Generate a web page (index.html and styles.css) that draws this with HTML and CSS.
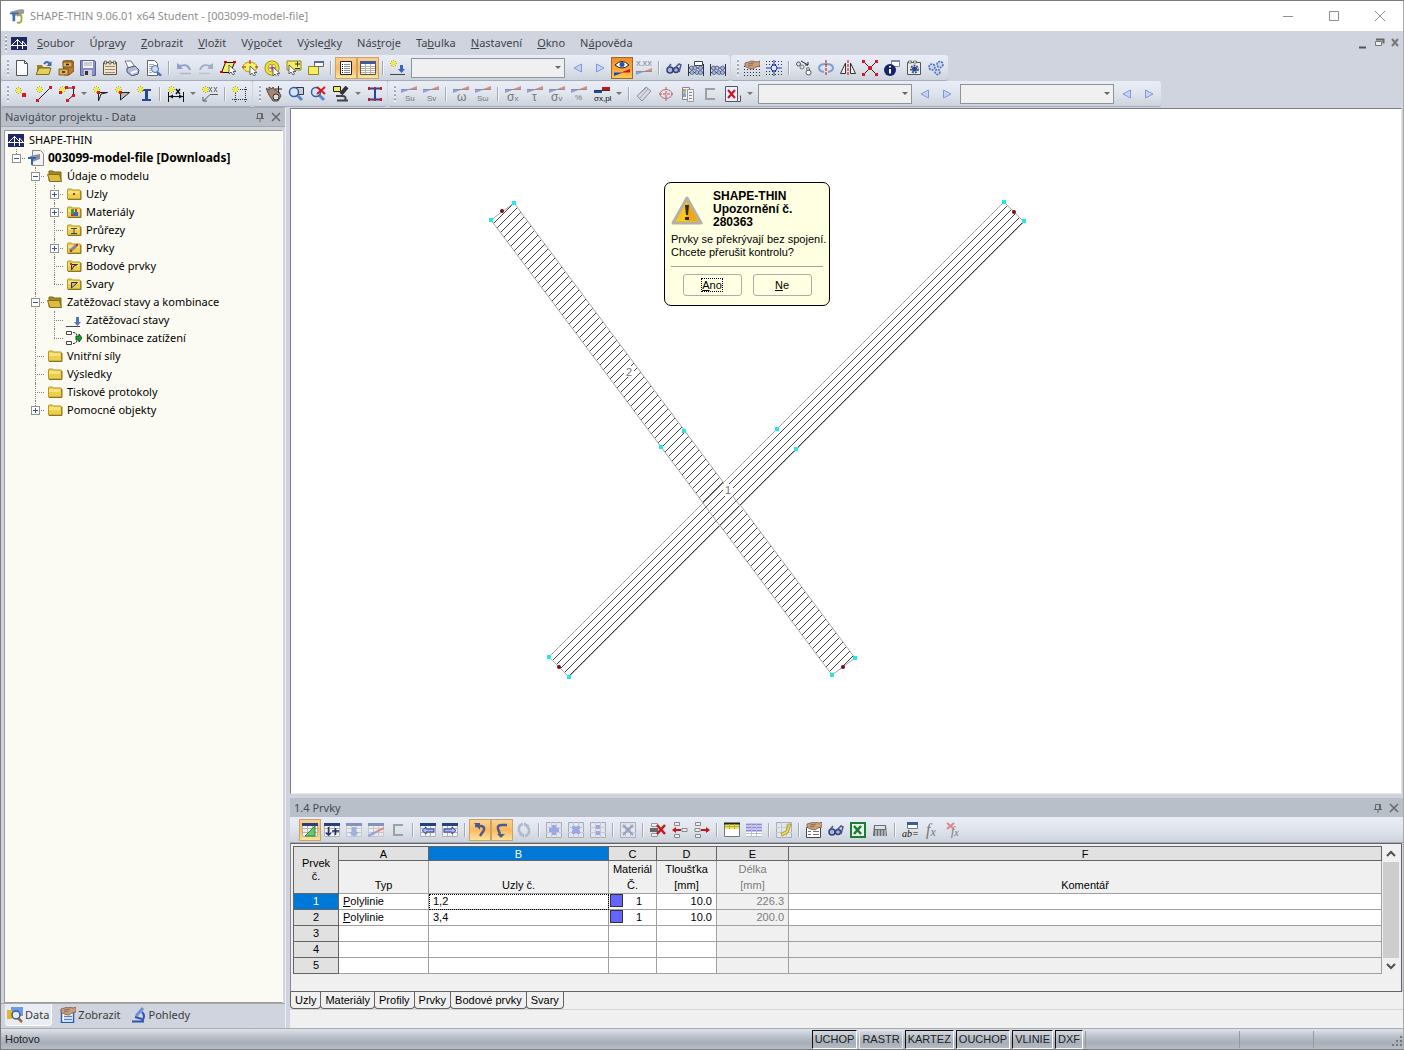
FILE: index.html
```html
<!DOCTYPE html>
<html lang="cs">
<head>
    <meta charset="UTF-8">
    <title>SHAPE-THIN</title>
    <link rel="stylesheet" href="styles.css">
</head>
<body>
<!-- icons -->
<svg class="defs" aria-hidden="true">
    <defs>
        <g id="star"><path d="M3.500 0v7M0 3.500h7M1 1l5 5M6 1L1 6" stroke="#b5ad18"/><path d="M3.500 1v5M1 3.500h5" stroke="#f7f03c" stroke-width="2"/></g>
        <g id="wedge"><path d="M0 3.500h9L0 7z" fill="#8f9fe0"/><path d="M16 3.500H7L16 0z" fill="#e08a80"/><path d="M0 3.500h16" stroke="#8f8f95"/></g>
        <g id="grid"><path d="M0 1h16v14H0z" fill="#f4f4f4"/><path d="M.5 1v13.500h15V1M0 6.500h16M0 10.500h16M5.500 3v12M10.500 3v12" fill="none" stroke="#b2b2b2"/><path d="M0 1h16v3H0z" fill="#27407e"/></g>
        <g id="sheet"><path d="M.5.5h15v15H.5z" fill="#e3e6ef" stroke="#aab"/><path d="M0 5.500h16M0 10.500h16M5.500 0v16M10.500 0v16" stroke="#c6c9d3"/></g>
        <g id="fold"><path d="M1.500 4q0-1 1-1h3l1 1h7q1 0 1 1v8h-13z" fill="#ecd04a" stroke="#b7971d"/><path d="M2 5h11v3H2z" fill="#f6e282"/><path d="M2 13.500h13V5" fill="none" stroke="#8a742c"/></g>
        <g id="arrowcur"><path d="M0 0v9l2-2 2 3 1.500-1L4 6.500h3z" fill="#fff" stroke="#444" stroke-width=".8"/></g>
        <g id="glasses"><circle cx="4" cy="10" r="3" fill="#aeb9da" stroke="#34427a" stroke-width="1.500"/><circle cx="10" cy="10" r="2.500" fill="#aeb9da" stroke="#34427a" stroke-width="1.500"/><path d="M2 8L5 4M9 8l4-4 2 1-2 7" fill="none" stroke="#4a5a90" stroke-width="1.500"/></g>
        <g id="abacus"><path d="M.5 4v12M15.500 4v12M0 8h16M0 12.500h16" stroke="#333"/><g fill="#a8b5dc" stroke="#3c4d80" stroke-width=".7"><circle cx="3.500" cy="8" r="2"/><circle cx="7" cy="8" r="2"/><circle cx="12.500" cy="8" r="2"/><circle cx="4" cy="12.500" r="2"/><circle cx="9" cy="12.500" r="2"/><circle cx="12.500" cy="12.500" r="2"/></g></g>
        <g id="lens"><path d="M9 9l5 5" stroke="#5f86d2" stroke-width="3"/><circle cx="6" cy="6" r="4.500" fill="#d5e5fa" stroke="#3c5a9c" stroke-width="1.500"/></g>
        <g id="hand"><path d="M1 3l7-2 5 1 3-1v5l-4 1-3 2-5-1-3-2z" fill="#c99f7d" stroke="#7b5a44" stroke-width=".8"/><path d="M4 4l6-1M4 6l5-1" stroke="#8f6d55"/></g>
    </defs>
    <symbol id="app" viewBox="0 0 18 18"><path d="M2 4l12-3 3 1v4l-4 2-9 1z" fill="#9a9a9a"/><path d="M1 5h10v2H7v8H4V7H1z" fill="#3f6fb5"/><path d="M9 9q3-2 5 0v6q-2 3-5 1" fill="none" stroke="#b59e3c" stroke-width="2"/></symbol>
    <symbol id="bridge" viewBox="0 0 16 13"><path d="M0 0h16v13H0z" fill="#1f2766"/><path d="M0 8.500h16M6.500 2v10M11.500 4v8M1 8L6.500 2.500 12 8M11.500 4L15 8" stroke="#fff" fill="none"/></symbol>
    <symbol id="new" viewBox="0 0 16 16"><path d="M2.500.5h8l3 3v12h-11z" fill="#fbfbfd" stroke="#555"/><path d="M10.500.5v3h3" fill="none" stroke="#555"/></symbol>
    <symbol id="open" viewBox="0 0 16 16"><path d="M1 14V5h5l1 2h7v7z" fill="#9a8423"/><path d="M0 14.500L3 8h12l-2 6.500z" fill="#e5d05d" stroke="#7f6c1a"/><path d="M8 4q3-4 6 0" fill="none" stroke="#3f6ca8" stroke-width="2"/><path d="M15.500 1v5h-5z" fill="#3f6ca8"/></symbol>
    <symbol id="cabinet" viewBox="0 0 16 16"><path d="M5 1l8-1 3 2v9l-5 4H6z" fill="#b57f30" stroke="#694412" stroke-width=".8"/><path d="M1 9h9v6H1zM5 2h9v5H5z" fill="#dfad58" stroke="#694412" stroke-width=".8"/><path d="M4 12h3M8 4.500h3" stroke="#222" stroke-width="1.500"/></symbol>
    <symbol id="save" viewBox="0 0 16 16"><path d="M.5.5h14l1 1v14H.5z" fill="#8a8fc6" stroke="#5a5f94"/><path d="M3 1h10v7H3z" fill="#f1f1f6"/><path d="M4 3h8M4 5h8" stroke="#aaa"/><path d="M4 10h8v6H4z" fill="#d2d2de"/><path d="M5 11h3v4H5z" fill="#333"/></symbol>
    <symbol id="notes" viewBox="0 0 16 16"><path d="M1.500 2.500h13v12h-13z" fill="#f0e4cf" stroke="#5e5344"/><path d="M2.500 1h2v3h-2zM7 1h2v3H7zM11.500 1h2v3h-2z" fill="#eee" stroke="#5e5344" stroke-width=".8"/><path d="M3 6.500h10M3 9.500h10M3 12.500h10" stroke="#9c8b70"/></symbol>
    <symbol id="print" viewBox="0 0 16 16"><path d="M1 1h6l4 6-6 2z" fill="#fdfdfd" stroke="#777"/><path d="M3 8l8-2 4 4-1 4-6 2-5-4z" fill="#b4bbdc" stroke="#4b5178"/><path d="M7 13l6-2" stroke="#fff" stroke-width="2"/></symbol>
    <symbol id="preview" viewBox="0 0 16 16"><path d="M1.500.5h7l3 3v12h-10z" fill="#fff" stroke="#666"/><path d="M3 4.500h5M3 6.500h3M3 8.500h2M3 10.500h2M3 12.500h3" stroke="#aaa"/><path d="M11 12l4 4" stroke="#4b70bd" stroke-width="2.500"/><circle cx="9" cy="9" r="3.500" fill="#c9dcf5" stroke="#4b6fae"/></symbol>
    <symbol id="undo" viewBox="0 0 16 16"><path d="M1 3v6h6L5 7q5-3 8 3h2Q13 2 4 5z" fill="#8fa2cc"/><path d="M4 13.500h11" stroke="#adb5c9" stroke-width="1.500"/></symbol>
    <symbol id="redo" viewBox="0 0 16 16"><path d="M15 3v6H9l2-2Q6 4 3 10H1Q3 2 12 5z" fill="#a3aec6"/><path d="M1 13.500h11" stroke="#bcc2ce" stroke-width="1.500"/></symbol>
    <symbol id="selquad" viewBox="0 0 16 16"><path d="M5.500 2.500h9l-4 10h-9z" fill="#f4ef5e" stroke="#111"/><path d="M4 2h3M13 2h3M0 12h3M9 12h3" stroke="#d00" stroke-width="2"/><use href="#arrowcur" x="9" y="5"/></symbol>
    <symbol id="sellasso" viewBox="0 0 16 16"><ellipse cx="8" cy="7" rx="7" ry="5" fill="#f6f16a" stroke="#a8981a"/><path d="M0 7h4M8 0v4M13 7h3" stroke="#d00"/><use href="#arrowcur" x="8" y="6"/></symbol>
    <symbol id="selring" viewBox="0 0 16 16"><circle cx="8" cy="8" r="5.500" fill="#fff" stroke="#8a8010" stroke-width="4"/><circle cx="8" cy="8" r="5.500" fill="none" stroke="#f0e62c" stroke-width="2.500"/><path d="M5 8h6M8 5v6" stroke="#d00"/><use href="#arrowcur" x="9" y="7"/></symbol>
    <symbol id="selplus" viewBox="0 0 16 16"><path d="M1 1h14v9H1z" fill="#f1ec62" stroke="#8e8625"/><path d="M9 4h5M11.500 1.500v5M9 8.500h5" stroke="#333"/><use href="#arrowcur" x="3" y="5"/></symbol>
    <symbol id="selwin" viewBox="0 0 16 16"><path d="M.5 6.500h10v8H.5z" fill="#f4ee63" stroke="#8e8625"/><path d="M6.500 1.500h9v5h-9z" fill="#fff" stroke="#667"/><path d="M6 1h10v2H6z" fill="#56699b"/></symbol>
    <symbol id="list" viewBox="0 0 16 16"><path d="M2.500 1.500h11v13h-11z" fill="#fff" stroke="#223"/><path d="M6 4.500h6M6 6.500h6M6 8.500h6M6 10.500h6M6 12.500h6" stroke="#8a8a94"/><path d="M4 4.500h1M4 6.500h1M4 8.500h1M4 10.500h1M4 12.500h1" stroke="#111"/></symbol>
    <symbol id="table" viewBox="0 0 16 16"><path d="M.5 1.500h15v13H.5z" fill="#fff" stroke="#55524c"/><path d="M0 1h16v3H0z" fill="#3e5a9a"/><path d="M1 6.500h14M1 8.500h14M1 10.500h14M1 12.500h14M5.500 4v10M10.500 4v10" stroke="#b8b2a4"/></symbol>
    <symbol id="newload" viewBox="0 0 16 16"><use href="#star"/><path d="M0 14.500h15" stroke="#444"/><path d="M10 5h3v4h2l-3.500 4L8 9h2z" fill="#3a62c0"/></symbol>
    <symbol id="left" viewBox="0 0 16 16"><path d="M11.500 4v8L4 8z" fill="#c6d5f6" stroke="#8497d8"/></symbol>
    <symbol id="right" viewBox="0 0 16 16"><path d="M4.500 4v8L12 8z" fill="#c6d5f6" stroke="#8497d8"/></symbol>
    <symbol id="eye" viewBox="0 0 16 16"><path d="M1 5q7-7 14 0-7 6-14 0z" fill="#fff" stroke="#222"/><circle cx="8" cy="4.500" r="2.500" fill="#27549c"/><path d="M0 12.500h9L0 16z" fill="#1649c8"/><path d="M16 12.500H7L16 9z" fill="#d01818"/></symbol>
    <symbol id="vals" viewBox="0 0 16 16"><use href="#wedge" y="8"/></symbol>
    <symbol id="view" viewBox="0 0 16 16"><use href="#glasses"/></symbol>
    <symbol id="calc1" viewBox="0 0 16 16"><use href="#abacus"/><path d="M6.500 1.500h8v4h-8z" fill="#fff" stroke="#444"/></symbol>
    <symbol id="calc2" viewBox="0 0 16 16"><use href="#abacus"/></symbol>
    <symbol id="gridhand" viewBox="0 0 16 16"><path d="M0 6.500h16M0 9.500h16M0 12.500h16M0 15.500h16" stroke="#333" stroke-dasharray="1 2"/><use href="#hand"/></symbol>
    <symbol id="snap" viewBox="0 0 16 16"><path d="M0 1.500h16M0 4.500h16M0 11.500h16M0 14.500h16" stroke="#333" stroke-dasharray="1 2"/><path d="M8 0v16M0 8h16" stroke="#1d35a8"/><circle cx="8" cy="8" r="3" fill="#dfe7ff" stroke="#1d35a8"/></symbol>
    <symbol id="copy" viewBox="0 0 16 16"><circle cx="2.500" cy="4" r="2" fill="none" stroke="#555"/><circle cx="6" cy="7" r="2" fill="none" stroke="#777"/><circle cx="12.500" cy="12.500" r="2.500" fill="#fff" stroke="#555"/><circle cx="12" cy="9" r="1.500" fill="none" stroke="#777"/><path d="M5 1l7 4M12 2v3h-3" fill="none" stroke="#222"/></symbol>
    <symbol id="rotate" viewBox="0 0 16 16"><path d="M6 12q-5-1-5-4 0-4 7-4t7 4q0 3-5 4" fill="none" stroke="#7e9fd4" stroke-width="2"/><path d="M8 0v16" stroke="#c00" stroke-dasharray="3 1"/></symbol>
    <symbol id="mirror" viewBox="0 0 16 16"><path d="M5.500 3v10.500h-5zM10.500 3v10.500h5z" fill="#eee" stroke="#333"/><path d="M8 0v16" stroke="#c00" stroke-dasharray="3 1"/></symbol>
    <symbol id="cross" viewBox="0 0 16 16"><path d="M2 2l12 12M14 2L2 14" stroke="#222"/><path d="M0 0h3v3H0zM13 0h3v3h-3zM0 13h3v3H0zM13 13h3v3h-3zM6 6h4v4H6z" fill="#d8181e"/></symbol>
    <symbol id="info" viewBox="0 0 16 16"><path d="M7.500.5h8v6h-8z" fill="#fff" stroke="#889"/><path d="M7 0h9v2H7z" fill="#7e8eb8"/><circle cx="6" cy="10" r="6" fill="#15246c"/><path d="M6 6v1.500M6 9v4.500" stroke="#fff" stroke-width="2"/></symbol>
    <symbol id="gearbox" viewBox="0 0 16 16"><path d="M1.500 2.500h13v12h-13z" fill="#f3eee2" stroke="#555"/><path d="M2.500 1h3v2h-3zM7.500 1h3v2h-3z" fill="#fff" stroke="#555" stroke-width=".8"/><circle cx="8.500" cy="9" r="3.500" fill="#fff" stroke="#3a5fa8" stroke-width="2" stroke-dasharray="2 1"/><circle cx="8.500" cy="9" r="2.500" fill="#2c4682"/></symbol>
    <symbol id="gears" viewBox="0 0 16 16"><g fill="#c4d4f2" stroke="#4a6db8" stroke-width="1.500" stroke-dasharray="2 1"><circle cx="12" cy="4.500" r="3"/><circle cx="4" cy="7" r="3"/><circle cx="9.500" cy="12" r="2.500"/></g></symbol>
    <symbol id="node" viewBox="0 0 16 16"><use href="#star" x="1" y="1"/><path d="M8 7h4v4H8z" fill="#d8181e"/></symbol>
    <symbol id="line" viewBox="0 0 16 16"><path d="M2 14L14 2" stroke="#222"/><use href="#star"/><path d="M0 13h3v3H0zM13 0h3v3h-3z" fill="#d8181e"/></symbol>
    <symbol id="poly" viewBox="0 0 16 16"><path d="M7 2h7.500v7L9 14" fill="none" stroke="#222"/><use href="#star"/><path d="M6 0h3v3H6zM13 0h3v3h-3zM13 8h3v3h-3zM7 13h3v3H7zM0 5h3v3H0z" fill="#d8181e"/></symbol>
    <symbol id="pt1" viewBox="0 0 16 16"><use href="#star"/><path d="M5.500 15V6.500h9L8 8z" fill="#eee" stroke="#222"/><path d="M4 5h3v3H4z" fill="#d8181e"/></symbol>
    <symbol id="pt2" viewBox="0 0 16 16"><use href="#star"/><path d="M5.500 14V6.500h9z" fill="#bbb" stroke="#222"/><path d="M4 5h3v3H4z" fill="#d8181e"/></symbol>
    <symbol id="ibeam" viewBox="0 0 16 16"><path d="M5 3h9v2h-3v8h3v2H5v-2h3V5H5z" fill="#27479b"/><use href="#star"/></symbol>
    <symbol id="dim" viewBox="0 0 16 16"><path d="M.5 6v10M15.500 6v10M1 10.500h14" stroke="#111"/><path d="M1 10.500l4-2v4zM15 10.500l-4-2v4z" fill="#111"/><use href="#star"/><path d="M8 3l4 5M12 3L8 8" stroke="#111" stroke-width="1.500"/></symbol>
    <symbol id="cmt" viewBox="0 0 16 16"><use href="#star"/><path d="M7 1l3 5M10 1L7 6M12 1l3 5M15 1l-3 5" stroke="#666"/><path d="M16 8.500H8l-6 6M1 11v4h4" fill="none" stroke="#555"/></symbol>
    <symbol id="frame" viewBox="0 0 16 16"><path d="M3.500 1v15M13.500 1v15M0 3.500h16M0 13.500h16" stroke="#333" stroke-dasharray="1 1"/><use href="#star"/></symbol>
    <symbol id="pan" viewBox="0 0 16 16"><path d="M0 2l3 2V1l3 2 1-2 2 3 4 2 2 4-3 5H7L3 9z" fill="#a58672" stroke="#5d4a40"/><path d="M9 3h7M12.500 0v7" stroke="#222"/><circle cx="10" cy="11" r="3" fill="#ddd" stroke="#333"/></symbol>
    <symbol id="zoomwin" viewBox="0 0 16 16"><path d="M6.500 1.500h9v7h-9z" fill="#ccd" stroke="#334"/><use href="#lens"/></symbol>
    <symbol id="zoomx" viewBox="0 0 16 16"><use href="#lens"/><path d="M7 1l8 7M15 1L7 8" stroke="#d8181e" stroke-width="2"/></symbol>
    <symbol id="scope" viewBox="0 0 16 16"><path d="M.5.5h7v5h-7z" fill="#f4ee50" stroke="#222"/><path d="M14 1L8 8" stroke="#333" stroke-width="4"/><path d="M4 14.500h11M9 10q5 0 3 4M3 10h6" stroke="#444" stroke-width="2" fill="none"/></symbol>
    <symbol id="ired" viewBox="0 0 16 16"><path d="M2 2.500h12M2 13.500h12M8 2v12" stroke="#27479b" stroke-width="2"/><path d="M1 1h2v3H1zM13 1h2v3h-2zM1 12h2v3H1zM13 12h2v3h-2zM7 1h2v2H7zM7 13h2v2H7z" fill="#d8181e"/></symbol>
    <symbol id="res" viewBox="0 0 16 16"><use href="#wedge"/></symbol>
    <symbol id="sxpl" viewBox="0 0 16 16"><path d="M8 1h8v3H8z" fill="#c01818"/><path d="M0 4h8v3H0z" fill="#1d46b8"/><path d="M0 4.500h16" stroke="#333"/></symbol>
    <symbol id="bar" viewBox="0 0 16 16"><path d="M1 10L10 1l5 4-9 10z" fill="#d4dbe8" stroke="#8a8f9c"/><path d="M4 12l8-9" stroke="#d88"/><path d="M2 9l8-7" stroke="#7aa0cc"/></symbol>
    <symbol id="target" viewBox="0 0 16 16"><ellipse cx="8" cy="8" rx="6" ry="4.500" fill="none" stroke="#b87078"/><path d="M8 1v14M1 8h14" stroke="#c55" stroke-dasharray="3 1"/></symbol>
    <symbol id="legend" viewBox="0 0 16 16"><path d="M2.500 1.500h7v12h-7z" fill="#f2f2f2" stroke="#888"/><path d="M7.500 3.500h6v12h-6z" fill="#f2f2f2" stroke="#999"/><path d="M3 3h3v2H3z" fill="#d88"/><path d="M3 5h3v3H3z" fill="#9c9"/><path d="M3 8h3v3H3z" fill="#89d"/><path d="M9 6.500h3M9 9.500h3M9 12.500h3" stroke="#888"/></symbol>
    <symbol id="bracket" viewBox="0 0 16 16"><path d="M13 3H4v10h9" fill="none" stroke="#a0a0a0" stroke-width="2"/></symbol>
    <symbol id="delx" viewBox="0 0 16 16"><path d="M.5.5h12v15H.5zM12.500 15.500h3v-6" fill="#eef" stroke="#555"/><path d="M3 4l7 8M10 4l-7 8" stroke="#c8141c" stroke-width="2"/></symbol>
    <symbol id="pin" viewBox="0 0 16 16"><path d="M5.500 9V4.500h5V9M4 9.500h8M8 10v3M9.500 5v4" fill="none" stroke="#666"/></symbol>
    <symbol id="close" viewBox="0 0 16 16"><path d="M4 4l8 8M12 4l-8 8" stroke="#666" stroke-width="1.500"/></symbol>
    <symbol id="doc" viewBox="0 0 16 16"><path d="M4.500.5h8l3 3v12h-11z" fill="#f3f3f3" stroke="#888"/><path d="M2 6l10-2v5l-8 3z" fill="#8a8f99"/><path d="M0 7h8v2H5v6H3V9H0z" fill="#2e62b4"/></symbol>
    <symbol id="folder" viewBox="0 0 16 16"><use href="#fold"/></symbol>
    <symbol id="fopen" viewBox="0 0 16 16"><path d="M2 13V3h4l1 1h7v9z" fill="#a58a22" stroke="#7d6716"/><path d="M3 13.500L.5 6.500h12l2 7z" fill="#dcbd40" stroke="#846d18"/></symbol>
    <symbol id="fnode" viewBox="0 0 16 16"><use href="#fold"/><path d="M7 7h2v2H7z" fill="#d8181e"/></symbol>
    <symbol id="fmat" viewBox="0 0 16 16"><use href="#fold"/><path d="M5 5h3v5H5z" fill="#3aa13a"/><path d="M8 8h4v4H8z" fill="#3c63c8"/><path d="M9 5h2v3H9zM5 10h3v2H5z" fill="#c33"/></symbol>
    <symbol id="fsec" viewBox="0 0 16 16"><use href="#fold"/><path d="M5 6.500h6M5 11.500h6M8 6v5" stroke="#345"/></symbol>
    <symbol id="fbar" viewBox="0 0 16 16"><use href="#fold"/><path d="M4 11l7-6" stroke="#889" stroke-width="3"/><path d="M4 10h2v2H4zM10 4h2v2h-2z" fill="#d22"/></symbol>
    <symbol id="fpt" viewBox="0 0 16 16"><use href="#fold"/><path d="M5.500 12V6.500h6L8 8z" fill="#bbb" stroke="#333"/><path d="M4 5h2v2H4z" fill="#d22"/></symbol>
    <symbol id="fweld" viewBox="0 0 16 16"><use href="#fold"/><path d="M5.500 12V6.500h6z" fill="#bbb" stroke="#333"/></symbol>
    <symbol id="load" viewBox="0 0 16 16"><path d="M0 14.500h14" stroke="#444"/><path d="M10 5h3v5h2l-3.500 4L8 10h2z" fill="#4d74c8"/></symbol>
    <symbol id="combi" viewBox="0 0 16 16"><path d="M.5 1.500h5v3h-5zM.5 11.500h5v3h-5z" fill="#fff" stroke="#444"/><path d="M7 2.500q4 0 4 4M7 13.500q4 0 4-4" fill="none" stroke="#222" stroke-dasharray="2 1"/><path d="M10 6h3V4l3 4-3 4v-2h-3z" fill="#1e9b36" stroke="#0b5a1b"/></symbol>
    <symbol id="tdata" viewBox="0 0 16 16"><path d="M4 0h12v9H4z" fill="#6a9be8"/><path d="M0 3h5v9H0z" fill="#e3b82a"/><path d="M11 11l4 4" stroke="#a5632c" stroke-width="2.500"/><circle cx="9" cy="8" r="4" fill="#dcebff" stroke="#445a80" stroke-width="1.500"/></symbol>
    <symbol id="tshow" viewBox="0 0 16 16"><path d="M1.500 3.500h12v12h-12z" fill="#fff" stroke="#2a5db5" stroke-width="1.500"/><path d="M4 9.500h8M4 12.500h8" stroke="#5a80c0" stroke-width="1.500"/><use href="#hand" y="-1"/></symbol>
    <symbol id="tview" viewBox="0 0 16 16"><path d="M12 1L5 9" stroke="#6d92dc" stroke-width="3"/><path d="M1 14.500h12M4 10l7 2" stroke="#2f55b4" stroke-width="2"/><path d="M11 5q4 4 0 9" fill="none" stroke="#2f55b4" stroke-width="2"/></symbol>
    <symbol id="gtri" viewBox="0 0 16 16"><use href="#grid"/><path d="M3 14L13 4v10z" fill="#67c76a" stroke="#2d8a38"/></symbol>
    <symbol id="gplus" viewBox="0 0 16 16"><use href="#grid"/><path d="M4.500 5v8M2 11l2.500 2L7 11M8 9h7M11.500 6v7" fill="none" stroke="#1d2f78" stroke-width="1.500"/></symbol>
    <symbol id="gdown" viewBox="0 0 16 16"><g opacity=".5"><use href="#grid"/></g><path d="M6 5h4v5h3l-5 5-5-5h3z" fill="#9fb0e0"/></symbol>
    <symbol id="gwedge" viewBox="0 0 16 16"><g opacity=".5"><use href="#grid"/></g><path d="M0 14l8-4" stroke="#8f9fe0" stroke-width="2"/><path d="M8 10l8-4" stroke="#e08a80" stroke-width="2"/></symbol>
    <symbol id="gleft" viewBox="0 0 16 16"><use href="#grid"/><path d="M2 8.500l4-3.500v2h8v3H6v2z" fill="#a3b8f4" stroke="#2b4398"/></symbol>
    <symbol id="gright" viewBox="0 0 16 16"><use href="#grid"/><path d="M14 8.500L10 5v2H2v3h8v2z" fill="#a3b8f4" stroke="#2b4398"/></symbol>
    <symbol id="hook1" viewBox="0 0 16 16"><path d="M3 4h5q5 0 4 4l-4 6" fill="none" stroke="#4a5c90" stroke-width="2.500"/><path d="M2 1h6v7z" fill="#4a5c90"/></symbol>
    <symbol id="hook2" viewBox="0 0 16 16"><path d="M13 3H8Q3 3 4 7l2 5" fill="none" stroke="#4a5c90" stroke-width="2.500"/><path d="M3 12h8l-4 4z" fill="#4a5c90"/></symbol>
    <symbol id="sync" viewBox="0 0 16 16"><path d="M7 2Q2 3 3 9l3 4M9 14q5-1 4-7l-3-4" fill="none" stroke="#b1b9ca" stroke-width="2.500"/><path d="M2 12h6v4zM14 4H8V0z" fill="#b1b9ca"/></symbol>
    <symbol id="spl" viewBox="0 0 16 16"><use href="#sheet"/><path d="M6 3h4v3h3v4h-3v3H6v-3H3V6h3z" fill="#9aaae0"/></symbol>
    <symbol id="smul" viewBox="0 0 16 16"><use href="#sheet"/><path d="M4 4h3l1 1 1-1h3v3l-1 1 1 1v3H9l-1-1-1 1H4V9l1-1-1-1z" fill="#9aaae0"/></symbol>
    <symbol id="sdot" viewBox="0 0 16 16"><use href="#sheet"/><path d="M6 3h4v4H6zM6 9h4v4H6z" fill="#9aaae0"/></symbol>
    <symbol id="sdel" viewBox="0 0 16 16"><use href="#sheet"/><path d="M3 3l10 10M13 3L3 13" stroke="#95a0c0" stroke-width="2"/></symbol>
    <symbol id="rowx" viewBox="0 0 16 16"><path d="M1.500 1.500h6v3h-6zM1.500 11.500h6v3h-6z" fill="#eee" stroke="#999"/><path d="M0 6h8v4H0z" fill="#666"/><path d="M7 3l8 9M15 3l-8 9" stroke="#c8141c" stroke-width="2.500"/></symbol>
    <symbol id="rowl" viewBox="0 0 16 16"><path d="M2.500.5h5v3h-5zM2.500 12.500h5v3h-5zM10 6.500h5v3h-5z" fill="#eee" stroke="#888"/><path d="M0 8l4-3v2h5v2H4v2z" fill="#c8141c"/></symbol>
    <symbol id="rowr" viewBox="0 0 16 16"><path d="M1.500.5h5v3h-5zM1.500 12.500h5v3h-5zM1 6.500h5v3H1z" fill="#eee" stroke="#888"/><path d="M16 8l-4-3v2H7v2h5v2z" fill="#c8141c"/></symbol>
    <symbol id="ytab" viewBox="0 0 16 16"><path d="M.5 1.500h15v13H.5z" fill="#fff" stroke="#777"/><path d="M1 2h14v5H1z" fill="#ece750"/><path d="M0 1.500h16" stroke="#222" stroke-width="2"/><path d="M1 4.500h14M5.500 2v5M10.500 2v5" stroke="#b5b040"/></symbol>
    <symbol id="btab" viewBox="0 0 16 16"><path d="M0 1h16v14H0z" fill="#fff"/><path d="M0 2.500h16M0 5.500h16M0 8.500h16" stroke="#8b8bd8" stroke-width="2"/><path d="M0 11.500h16M0 14.500h16M5.500 1v14M10.500 1v14" stroke="#bbc"/></symbol>
    <symbol id="edit" viewBox="0 0 16 16"><use href="#sheet"/><path d="M15 2l-3 9-6 3-1-3 5-2 2-7z" fill="#e6da55" stroke="#b1a52f"/></symbol>
    <symbol id="prop" viewBox="0 0 16 16"><path d="M.5 5.500h14v10H.5z" fill="#fff" stroke="#444"/><path d="M2 9.500h3M7 9.500h6M2 12.500h3M7 12.500h6" stroke="#777"/><use href="#hand" y="-1"/></symbol>
    <symbol id="xls" viewBox="0 0 16 16"><path d="M1 1h14v14H1z" fill="#e8f4e8" stroke="#1e7a34" stroke-width="2"/><path d="M4 4l7 8M11 4l-7 8" stroke="#1e7a34" stroke-width="2.500"/></symbol>
    <symbol id="calc" viewBox="0 0 16 16"><path d="M2 3h12l1 11H1z" fill="#6a6d75"/><path d="M3 4h10v3H3z" fill="#dbe3e8"/><path d="M3 9h11M3 11h11M3 13h11" stroke="#eee" stroke-dasharray="2 1"/></symbol>
    <symbol id="win" viewBox="0 0 16 16"><path d="M5.500.5h10v6h-10z" fill="#fff" stroke="#777"/><path d="M5 0h11v3H5z" fill="#3e5a9a"/></symbol>
    <symbol id="redx" viewBox="0 0 16 16"><path d="M1 1l7 6M8 1L1 7" stroke="#d88" stroke-width="2"/></symbol>
    <symbol id="warn" viewBox="0 0 32 30"><path d="M16 3L30 28H2z" fill="#fbc818" stroke="#b4b0a4" stroke-width="3" stroke-linejoin="round"/><path d="M16 6l11 20H16z" fill="#f3a80c"/><path d="M14 10h4l-1 10h-2zM14 22h4v3h-4z" fill="#2b2b2b"/></symbol>
</svg>

<div class="window">
    <header class="title">
        <svg class="appicon"><use href="#app"/></svg>
        <h1>SHAPE-THIN 9.06.01 x64 Student - [003099-model-file]</h1>
        <button class="wbtn" aria-label="Minimalizovat"><svg viewBox="0 0 12 12"><path d="M1 6.500h10"/></svg></button>
        <button class="wbtn" aria-label="Maximalizovat"><svg viewBox="0 0 12 12"><path d="M1.500 1.500h9v9h-9z"/></svg></button>
        <button class="wbtn" aria-label="Zavřít"><svg viewBox="0 0 12 12"><path d="M1 1l10 10M11 1L1 11"/></svg></button>
    </header>

    <nav class="menu">
        <i class="grip"></i>
        <svg class="bridge"><use href="#bridge"/></svg>
        <a href="#"><u>S</u>oubor</a>
        <a href="#">Úpr<u>a</u>vy</a>
        <a href="#"><u>Z</u>obrazit</a>
        <a href="#"><u>V</u>ložit</a>
        <a href="#">Vý<u>p</u>očet</a>
        <a href="#">Výsle<u>d</u>ky</a>
        <a href="#">Nás<u>t</u>roje</a>
        <a href="#">Ta<u>b</u>ulka</a>
        <a href="#"><u>N</u>astavení</a>
        <a href="#"><u>O</u>kno</a>
        <a href="#">N<u>á</u>pověda</a>
        <svg class="mdi" viewBox="0 0 42 12"><path d="M1 10.500h7" stroke="#555" stroke-width="2"/><path d="M17.500 4.500h6v4h-6z" fill="#eee" stroke="#777"/><path d="M18 2.500h7.500v4" fill="none" stroke="#666" stroke-width="2"/><path d="M34 2l6 7M40 2l-6 7" stroke="#777" stroke-width="2"/></svg>
    </nav>

    <div class="bars">
        <div class="bar">
            <i class="grip"></i>
            <button class="tb" aria-label="Nový"><svg><use href="#new"/></svg></button>
            <button class="tb" aria-label="Otevřít"><svg><use href="#open"/></svg></button>
            <button class="tb" aria-label="Správce projektů"><svg><use href="#cabinet"/></svg></button>
            <button class="tb" aria-label="Uložit"><svg><use href="#save"/></svg></button>
            <button class="tb" aria-label="Protokol"><svg><use href="#notes"/></svg></button>
            <button class="tb" aria-label="Tisk"><svg><use href="#print"/></svg></button>
            <button class="tb" aria-label="Náhled"><svg><use href="#preview"/></svg></button>
            <i class="sep"></i>
            <button class="tb" aria-label="Zpět"><svg><use href="#undo"/></svg></button>
            <button class="tb" aria-label="Znovu"><svg><use href="#redo"/></svg></button>
            <button class="tb" aria-label="Výběr rovnoběžníkem"><svg><use href="#selquad"/></svg></button>
            <button class="tb" aria-label="Výběr elipsou"><svg><use href="#sellasso"/></svg></button>
            <button class="tb" aria-label="Výběr prstencem"><svg><use href="#selring"/></svg></button>
            <button class="tb" aria-label="Přidat k výběru"><svg><use href="#selplus"/></svg></button>
            <button class="tb" aria-label="Zvláštní výběr"><svg><use href="#selwin"/></svg></button>
            <i class="sep"></i>
            <button class="tb on" aria-label="Navigátor"><svg><use href="#list"/></svg></button>
            <button class="tb on" aria-label="Tabulky"><svg><use href="#table"/></svg></button>
            <i class="sep"></i>
            <button class="tb" aria-label="Nový zatěžovací stav"><svg><use href="#newload"/></svg></button>
            <span class="combo"><select aria-label="Zatěžovací stav"><option></option></select></span>
            <button class="tb" aria-label="Předchozí"><svg><use href="#left"/></svg></button>
            <button class="tb" aria-label="Další"><svg><use href="#right"/></svg></button>
            <button class="tb hot" aria-label="Zobrazit výsledky"><svg><use href="#eye"/></svg></button>
            <button class="tb" aria-label="Hodnoty"><svg><use href="#vals"/><text x="0" y="6" class="t7">X.XX</text></svg></button>
            <i class="sep"></i>
            <button class="tb" aria-label="Pohled"><svg><use href="#view"/></svg></button>
            <button class="tb" aria-label="Výpočet"><svg><use href="#calc1"/></svg></button>
            <button class="tb" aria-label="Vypočítat vše"><svg><use href="#calc2"/></svg></button>
        </div>
        <div class="bar">
            <i class="grip"></i>
            <button class="tb" aria-label="Nastavit rastr"><svg><use href="#gridhand"/></svg></button>
            <button class="tb" aria-label="Uchopení"><svg><use href="#snap"/></svg></button>
            <i class="sep"></i>
            <button class="tb" aria-label="Kopírovat"><svg><use href="#copy"/></svg></button>
            <button class="tb" aria-label="Otočit"><svg><use href="#rotate"/></svg></button>
            <button class="tb" aria-label="Zrcadlit"><svg><use href="#mirror"/></svg></button>
            <button class="tb" aria-label="Spojit"><svg><use href="#cross"/></svg></button>
            <button class="tb" aria-label="Informace"><svg><use href="#info"/></svg></button>
            <button class="tb" aria-label="Možnosti"><svg><use href="#gearbox"/></svg></button>
            <button class="tb" aria-label="Nastavení programu"><svg><use href="#gears"/></svg></button>
        </div>
    </div>
    <div class="bars">
        <div class="bar">
            <i class="grip"></i>
            <button class="tb" aria-label="Nový uzel"><svg><use href="#node"/></svg></button>
            <button class="tb" aria-label="Nový prvek"><svg><use href="#line"/></svg></button>
            <button class="tb drop" aria-label="Polylinie"><svg><use href="#poly"/></svg></button>
            <button class="tb" aria-label="Bodový prvek"><svg><use href="#pt1"/></svg></button>
            <button class="tb" aria-label="Svar"><svg><use href="#pt2"/></svg></button>
            <button class="tb" aria-label="Profil"><svg><use href="#ibeam"/></svg></button>
            <i class="sep"></i>
            <button class="tb drop" aria-label="Kóta"><svg><use href="#dim"/></svg></button>
            <button class="tb" aria-label="Komentář"><svg><use href="#cmt"/></svg></button>
            <i class="sep"></i>
            <button class="tb" aria-label="Linie"><svg><use href="#frame"/></svg></button>
        </div>
        <div class="bar">
            <i class="grip"></i>
            <button class="tb" aria-label="Posun"><svg><use href="#pan"/></svg></button>
            <button class="tb" aria-label="Zvětšit oknem"><svg><use href="#zoomwin"/></svg></button>
            <button class="tb" aria-label="Zrušit zvětšení"><svg><use href="#zoomx"/></svg></button>
            <button class="tb drop" aria-label="Detail"><svg><use href="#scope"/></svg></button>
            <button class="tb" aria-label="Celý průřez"><svg><use href="#ired"/></svg></button>
        </div>
        <div class="bar">
            <i class="grip"></i>
            <button class="tb" aria-label="Su"><svg><use href="#res"/><text x="4" y="15" class="t9">Su</text></svg></button>
            <button class="tb" aria-label="Sv"><svg><use href="#res"/><text x="4" y="15" class="t9">Sv</text></svg></button>
            <i class="sep"></i>
            <button class="tb" aria-label="Omega"><svg><use href="#res"/><text x="4" y="15" class="t12">ω</text></svg></button>
            <button class="tb" aria-label="S omega"><svg><use href="#res"/><text x="2" y="15" class="t9">Sω</text></svg></button>
            <i class="sep"></i>
            <button class="tb" aria-label="Sigma x"><svg><use href="#res"/><text x="2" y="15" class="t12">σ<tspan class="t9">x</tspan></text></svg></button>
            <button class="tb" aria-label="Tau"><svg><use href="#res"/><text x="5" y="15" class="t12">τ</text></svg></button>
            <button class="tb" aria-label="Sigma v"><svg><use href="#res"/><text x="2" y="15" class="t12">σ<tspan class="t9">v</tspan></text></svg></button>
            <button class="tb" aria-label="Využití"><svg><use href="#res"/><text x="4" y="14" class="t9">%</text></svg></button>
            <button class="tb drop" aria-label="Sigma x,pl"><svg><use href="#sxpl"/><text x="0" y="15" class="t9 dk">σx,pl</text></svg></button>
            <i class="sep"></i>
            <button class="tb" aria-label="Prvky"><svg><use href="#bar"/></svg></button>
            <button class="tb" aria-label="Těžiště"><svg><use href="#target"/></svg></button>
            <button class="tb" aria-label="Legenda"><svg><use href="#legend"/></svg></button>
            <button class="tb" aria-label="Obrys"><svg><use href="#bracket"/></svg></button>
            <button class="tb drop" aria-label="Vymazat"><svg><use href="#delx"/></svg></button>
            <span class="combo"><select aria-label="Řez"><option></option></select></span>
            <button class="tb" aria-label="Předchozí řez"><svg><use href="#left"/></svg></button>
            <button class="tb" aria-label="Další řez"><svg><use href="#right"/></svg></button>
            <span class="combo"><select aria-label="Část"><option></option></select></span>
            <button class="tb" aria-label="Předchozí část"><svg><use href="#left"/></svg></button>
            <button class="tb" aria-label="Další část"><svg><use href="#right"/></svg></button>
        </div>
    </div>

    <main class="main">
        <aside class="side">
            <div class="phead">
                <h2>Navigátor projektu - Data</h2>
                <button aria-label="Připnout"><svg><use href="#pin"/></svg></button>
                <button aria-label="Zavřít navigátor"><svg><use href="#close"/></svg></button>
            </div>
            <div class="tree">
                <div class="row root"><svg class="bridge"><use href="#bridge"/></svg>SHAPE-THIN</div>
                <ul>
                    <li>
                        <div class="row bold"><span class="tg"><b class="pm"></b></span><svg><use href="#doc"/></svg>003099-model-file [Downloads]</div>
                        <ul>
                            <li>
                                <div class="row"><span class="tg"><b class="pm"></b></span><svg><use href="#fopen"/></svg>Údaje o modelu</div>
                                <ul>
                                    <li><div class="row"><span class="tg"><b class="pm plus"></b></span><svg><use href="#fnode"/></svg>Uzly</div></li>
                                    <li><div class="row"><span class="tg"><b class="pm plus"></b></span><svg><use href="#fmat"/></svg>Materiály</div></li>
                                    <li><div class="row"><span class="tg"></span><svg><use href="#fsec"/></svg>Průřezy</div></li>
                                    <li><div class="row"><span class="tg"><b class="pm plus"></b></span><svg><use href="#fbar"/></svg>Prvky</div></li>
                                    <li><div class="row"><span class="tg"></span><svg><use href="#fpt"/></svg>Bodové prvky</div></li>
                                    <li><div class="row"><span class="tg"></span><svg><use href="#fweld"/></svg>Svary</div></li>
                                </ul>
                            </li>
                            <li>
                                <div class="row"><span class="tg"><b class="pm"></b></span><svg><use href="#fopen"/></svg>Zatěžovací stavy a kombinace</div>
                                <ul>
                                    <li><div class="row"><span class="tg"></span><svg><use href="#load"/></svg>Zatěžovací stavy</div></li>
                                    <li><div class="row"><span class="tg"></span><svg><use href="#combi"/></svg>Kombinace zatížení</div></li>
                                </ul>
                            </li>
                            <li><div class="row"><span class="tg"></span><svg><use href="#folder"/></svg>Vnitřní síly</div></li>
                            <li><div class="row"><span class="tg"></span><svg><use href="#folder"/></svg>Výsledky</div></li>
                            <li><div class="row"><span class="tg"></span><svg><use href="#folder"/></svg>Tiskové protokoly</div></li>
                            <li><div class="row"><span class="tg"><b class="pm plus"></b></span><svg><use href="#folder"/></svg>Pomocné objekty</div></li>
                        </ul>
                    </li>
                </ul>
            </div>
            <div class="sidetabs">
                <button class="cur"><svg><use href="#tdata"/></svg>Data</button>
                <button><svg><use href="#tshow"/></svg>Zobrazit</button>
                <button><svg><use href="#tview"/></svg>Pohledy</button>
            </div>
        </aside>

        <section class="work">
            <div class="canvas">
                <svg class="drawing">
                    <defs>
                        <pattern id="hatch" width="8" height="8" patternUnits="userSpaceOnUse">
                            <path d="M4 0h1v1h-1zM3 1h1v1h-1zM2 2h1v1h-1zM1 3h1v1h-1zM0 4h1v1h-1zM7 5h1v1h-1zM6 6h1v1h-1zM5 7h1v1h-1z" fill="#444"/>
                        </pattern>
                    </defs>
                    <g transform="translate(-291 -109)">
                        <g fill="url(#hatch)" stroke="#a6a6a6">
                            <path d="M491 220L514 203 855 658 832 675z"/>
                            <path d="M549 657L1004 202 1024 222 569 677z" class="white"/>
                            <path d="M549 657L1004 202 1024 222 569 677z"/>
                            <path d="M703 503L723 483" stroke="#777"/>
                            <path d="M703 503L720 526M723 483L740 506"/>
                        </g>
                        <path d="M624 366h10v11h-10zM723 484h10v12h-10z" fill="#fff"/>
                        <g class="num"><text x="626" y="376">2</text><text x="725" y="494">1</text></g>
                        <path d="M489 218h4v4h-4zM512 201h4v4h-4zM853 656h4v4h-4zM830 673h4v4h-4zM682 429h4v4h-4zM659 445h4v4h-4zM547 655h4v4h-4zM567 675h4v4h-4zM1002 200h4v4h-4zM1022 219h4v4h-4zM775 427h4v4h-4zM794 447h4v4h-4z" fill="#1fe8f0"/>
                        <g fill="#7a0c14"><circle cx="502" cy="211" r="2"/><circle cx="843" cy="667" r="2"/><circle cx="559" cy="667" r="2"/><circle cx="1014" cy="212" r="2"/></g>
                    </g>
                </svg>
                <div class="dialog" role="alertdialog" aria-labelledby="dt">
                    <div class="dhead">
                        <svg><use href="#warn"/></svg>
                        <h3 id="dt">SHAPE-THIN<br>Upozornění č.<br>280363</h3>
                    </div>
                    <p>Prvky se překrývají bez spojení.<br>Chcete přerušit kontrolu?</p>
                    <div class="dbtns">
                        <button><span class="focus"><u>A</u>no</span></button>
                        <button><u>N</u>e</button>
                    </div>
                </div>
            </div>

            <div class="phead tophead">
                <h2>1.4 Prvky</h2>
                <button aria-label="Připnout tabulku"><svg><use href="#pin"/></svg></button>
                <button aria-label="Zavřít tabulku"><svg><use href="#close"/></svg></button>
            </div>
            <div class="bar tbar">
                <button class="tb on" aria-label="Grafika"><svg><use href="#gtri"/></svg></button>
                <button class="tb" aria-label="Vložit řádek"><svg><use href="#gplus"/></svg></button>
                <button class="tb" aria-label="Zatížení"><svg><use href="#gdown"/></svg></button>
                <button class="tb" aria-label="Výsledky"><svg><use href="#gwedge"/></svg></button>
                <button class="tb" aria-label="Průřez"><svg><use href="#bracket"/></svg></button>
                <i class="sep"></i>
                <button class="tb" aria-label="Předchozí tabulka"><svg><use href="#gleft"/></svg></button>
                <button class="tb" aria-label="Další tabulka"><svg><use href="#gright"/></svg></button>
                <i class="sep"></i>
                <button class="tb on" aria-label="Výběr z grafiky"><svg><use href="#hook1"/></svg></button>
                <button class="tb on" aria-label="Výběr do grafiky"><svg><use href="#hook2"/></svg></button>
                <button class="tb" aria-label="Obnovit"><svg><use href="#sync"/></svg></button>
                <i class="sep"></i>
                <button class="tb" aria-label="Přidat"><svg><use href="#spl"/></svg></button>
                <button class="tb" aria-label="Násobit"><svg><use href="#smul"/></svg></button>
                <button class="tb" aria-label="Dělit"><svg><use href="#sdot"/></svg></button>
                <i class="sep"></i>
                <button class="tb" aria-label="Vyprázdnit"><svg><use href="#sdel"/></svg></button>
                <i class="sep"></i>
                <button class="tb" aria-label="Smazat řádek"><svg><use href="#rowx"/></svg></button>
                <button class="tb" aria-label="Řádek vlevo"><svg><use href="#rowl"/></svg></button>
                <button class="tb" aria-label="Řádek vpravo"><svg><use href="#rowr"/></svg></button>
                <i class="sep"></i>
                <button class="tb" aria-label="Záhlaví"><svg><use href="#ytab"/></svg></button>
                <button class="tb" aria-label="Mřížka"><svg><use href="#btab"/></svg></button>
                <i class="sep"></i>
                <button class="tb" aria-label="Upravit"><svg><use href="#edit"/></svg></button>
                <i class="sep"></i>
                <button class="tb" aria-label="Vlastnosti"><svg><use href="#prop"/></svg></button>
                <button class="tb" aria-label="Zobrazení"><svg><use href="#view"/></svg></button>
                <button class="tb" aria-label="Export do Excelu"><svg><use href="#xls"/></svg></button>
                <button class="tb" aria-label="Kalkulačka"><svg><use href="#calc"/></svg></button>
                <i class="sep"></i>
                <button class="tb" aria-label="Parametry"><svg><use href="#win"/><text x="0" y="15" class="it t10 dk">ab=</text></svg></button>
                <button class="tb" aria-label="Vzorec"><svg><text x="2" y="13" class="it t16">f<tspan class="t12" dy="1">x</tspan></text></svg></button>
                <button class="tb" aria-label="Smazat vzorec"><svg><text x="5" y="13" class="it t12">f<tspan class="t10" dy="1">x</tspan></text><use href="#redx"/></svg></button>
            </div>
            <div class="sheet">
                <table>
                    <colgroup><col class="w0"><col class="w1"><col class="w2"><col class="w3"><col class="w4"><col class="w5"><col></colgroup>
                    <thead>
                        <tr class="abc"><th rowspan="2" class="corner">Prvek<br>č.</th><th>A</th><th class="sel">B</th><th>C</th><th>D</th><th>E</th><th>F</th></tr>
                        <tr class="names"><th>Typ</th><th>Uzly č.</th><th>Materiál<br>Č.</th><th>Tloušťka<br>[mm]</th><th class="ro">Délka<br>[mm]</th><th>Komentář</th></tr>
                    </thead>
                    <tbody>
                        <tr><th class="sel">1</th><td><u>P</u>olylinie</td><td class="edit">1,2</td><td class="mat"><i class="sw"></i>1</td><td class="r">10.0</td><td class="r ro">226.3</td><td></td></tr>
                        <tr><th>2</th><td><u>P</u>olylinie</td><td>3,4</td><td class="mat"><i class="sw"></i>1</td><td class="r">10.0</td><td class="r ro">200.0</td><td></td></tr>
                        <tr><th>3</th><td></td><td></td><td></td><td></td><td class="ro"></td><td class="ro"></td></tr>
                        <tr><th>4</th><td></td><td></td><td></td><td></td><td class="ro"></td><td class="ro"></td></tr>
                        <tr><th>5</th><td></td><td></td><td></td><td></td><td class="ro"></td><td class="ro"></td></tr>
                    </tbody>
                </table>
                <div class="scroll">
                    <button aria-label="Nahoru"><svg viewBox="0 0 16 16"><path d="M4 10l4-4 4 4"/></svg></button>
                    <div class="thumb"></div>
                    <button aria-label="Dolů"><svg viewBox="0 0 16 16"><path d="M4 6l4 4 4-4"/></svg></button>
                </div>
            </div>
            <div class="tabs">
                <button>Uzly</button>
                <button>Materiály</button>
                <button>Profily</button>
                <button class="cur">Prvky</button>
                <button>Bodové prvky</button>
                <button>Svary</button>
            </div>
        </section>
    </main>

    <footer class="status">
        <span class="msg">Hotovo</span>
        <button class="in">UCHOP</button>
        <button>RASTR</button>
        <button class="in">KARTEZ</button>
        <button class="in">OUCHOP</button>
        <button class="in">VLINIE</button>
        <button class="in">DXF</button>
        <span class="cell wide"></span>
        <span class="cell"></span>
        <span class="cell last"><svg viewBox="0 0 12 12"><path d="M9 1h2M5 5h2M9 5h2M1 9h2M5 9h2M9 9h2" stroke="#70757e" stroke-width="2"/></svg></span>
    </footer>
</div>
</body>
</html>
```
FILE: styles.css
```css
*{
    box-sizing: border-box;
}
body{
    margin: 0;
    font: 11px/18px "Noto Sans", "Open Sans", sans-serif;
    color: #3c3c3c;
}
h1,h2,h3,p,ul{
    margin: 0;
    padding: 0;
    font: inherit;
}
button{
    margin: 0;
    padding: 0;
    border: 0;
    background: none;
    font: inherit;
    color: inherit;
}
svg{
    display: block;
    width: 16px;
    height: 16px;
    flex: none;
    fill: none;
    overflow: visible;
}
svg.defs{
    position: absolute;
    width: 0;
    height: 0;
}
/* lettering on icons */
.tb text{
    font-family: "Liberation Sans", sans-serif;
    fill: #777;
}
.tb .it{
    font-family: "Liberation Serif", serif;
    font-style: italic;
}
.tb .dk{
    fill: #111;
}
.t7{
    font-size: 7px;
}
.t9{
    font-size: 8px;
}
.t10{
    font-size: 10px;
}
.t12{
    font-size: 12px;
}
.t16{
    font-size: 16px;
}
.window{
    display: flex;
    flex-direction: column;
    height: 100vh;
    background: #cfd4de;
    border: 1px solid #7c7c7c;
    border-right-color: #a9a9a9;
    overflow: hidden;
}

/* title + menu */
.title{
    display: flex;
    align-items: center;
    height: 30px;
    background: #fff;
    padding-left: 8px;
}
.title h1{
    flex: 1;
    margin-left: 5px;
    color: #8f8f8f;
}
.title .appicon{
    width: 16px;
    height: 18px;
}
.wbtn{
    width: 46px;
    height: 30px;
    display: flex;
    align-items: center;
    justify-content: center;
}
.wbtn svg{
    width: 12px;
    height: 12px;
    stroke: #8f8f8f;
}
.menu{
    display: flex;
    align-items: center;
    gap: 1px;
    height: 24px;
    padding-left: 2px;
}
.menu a{
    padding: 0 7px;
    color: #3f434b;
    text-decoration: none;
}
.bridge{
    height: 13px;
}
.menu .bridge{
    margin: 0 2px 0 1px;
}
.mdi{
    width: 42px;
    height: 12px;
    margin-left: auto;
    margin-right: 3px;
}
.grip{
    width: 2px;
    height: 17px;
    margin: 0 2px;
    background: repeating-linear-gradient(#fafbfd 0 1px, #a2a9b6 1px 3px, transparent 3px 4px);
}

/* toolbars */
.bars{
    display: flex;
    gap: 1px;
    height: 26px;
}
.bar{
    display: flex;
    align-items: center;
    height: 26px;
    padding-left: 4px;
    padding-right: 1px;
    background: linear-gradient(#e9edf7, #dfe4ed 50%, #cdd3dc);
    border-bottom: 1px solid #a7abb5;
    border-radius: 3px;
}
.tb{
    width: 22px;
    height: 22px;
    display: flex;
    align-items: center;
    justify-content: center;
    flex: none;
}
.tb.on{
    background: linear-gradient(#fbd193, #fdb95e 50%, #fde39a);
    border: 1px solid #c9a46a;
}
.tb.hot{
    background: linear-gradient(#f28c28, #fba83a 60%, #fdc84a);
    border: 1px solid #9a6a2c;
}
.tb.drop{
    width: 35px;
    justify-content: flex-start;
    padding-left: 4px;
}
.drop::after{
    content: "";
    margin-left: 6px;
    border: 3px solid transparent;
    border-top-color: #777;
    border-bottom: 0;
}
.sep{
    width: 2px;
    height: 14px;
    margin: 0 3px;
    border-left: 1px solid #a2a8b4;
    border-right: 1px solid #f4f6fa;
}
.combo{
    position: relative;
    width: 154px;
    height: 20px;
    margin: 0 2px;
}
.combo select{
    display: block;
    width: 100%;
    height: 100%;
    appearance: none;
    background: #f0f0f0;
    border: 1px solid #8f949c;
    border-radius: 0;
}
.combo::after{
    content: "";
    position: absolute;
    right: 4px;
    top: 8px;
    border: 3px solid transparent;
    border-top-color: #666;
    border-bottom: 0;
}

/* navigator */
.main{
    flex: 1;
    display: flex;
    min-height: 0;
    gap: 4px;
}
.side{
    width: 285px;
    display: flex;
    flex-direction: column;
    border-top: 1px solid #a7abb5;
    border-right: 1px solid #eef0f5;
}
.phead{
    display: flex;
    align-items: center;
    height: 19px;
    padding: 0 1px 0 4px;
    background: #b8bfc9;
    color: #474b52;
    border-bottom: 1px solid #a3a9b3;
}
.phead h2{
    flex: 1;
}
.phead button{
    width: 16px;
}
.tree{
    flex: 1;
    margin: 3px 2px 0 3px;
    padding: 0 0 0 2px;
    background: #fcfbf3;
    border: 1px solid #9a9a9a;
    border-right-color: #fff;
    color: #000;
}
.tree ul{
    list-style: none;
}
.tree ul ul{
    margin-left: 19px;
}
.tree li{
    position: relative;
}
/* vertical connector */
.tree li::before{
    content: "";
    position: absolute;
    left: 9px;
    top: 0;
    bottom: 0;
    border-left: 1px dotted #808080;
}
.tree li:last-child::before{
    bottom: auto;
    height: 9px;
}
.row{
    position: relative;
    display: flex;
    align-items: center;
    height: 18px;
    white-space: nowrap;
}
.row svg{
    margin: 0 4px 0 2px;
}
.root svg{
    margin: 0 5px 0 1px;
}
.bold{
    font-weight: bold;
    font-size: 12px;
}
.tg{
    width: 19px;
    height: 18px;
    display: flex;
    align-items: center;
    background: linear-gradient(90deg, #808080 50%, transparent 50%) 9px 9px / 2px 1px repeat-x;
    background-clip: content-box;
    background-origin: content-box;
    padding-left: 9px;
    background-position: 0 9px;
}
.pm{
    width: 9px;
    height: 9px;
    margin-left: -4px;
    border: 1px solid #919191;
    background: linear-gradient(#3a569c, #3a569c) center / 5px 1px no-repeat #fff;
}
.plus{
    background: linear-gradient(#3a569c, #3a569c) center / 5px 1px no-repeat, linear-gradient(#3a569c, #3a569c) center / 1px 5px no-repeat #fff;
}
.sidetabs{
    display: flex;
    gap: 6px;
    height: 25px;
    padding: 0 0 2px 4px;
    border-top: 1px solid #a7abb5;
}
.sidetabs button{
    display: flex;
    align-items: center;
    gap: 2px;
    padding: 0 2px;
    border-radius: 0 0 4px 4px;
}
.sidetabs .cur{
    background: #e9ecf3;
    border-right: 1px solid #fff;
    border-bottom: 1px solid #fff;
}

/* drawing area */
.work{
    flex: 1;
    min-width: 0;
    display: flex;
    flex-direction: column;
}
.canvas{
    position: relative;
    flex: 1;
    margin: 1px 1px 4px 0;
    background: #fff;
    border: 1px solid #7d7d84;
    border-bottom-color: #e8e8e8;
    border-right-color: #e3e3e3;
    overflow: hidden;
}
.drawing{
    width: 100%;
    height: 100%;
}
.white{
    fill: #fff;
}
.num{
    font: 11px "Liberation Sans", sans-serif;
    fill: #777;
}
.dialog{
    position: absolute;
    left: 373px;
    top: 73px;
    width: 166px;
    padding: 7px 6px 9px;
    background: #ffffe1;
    border: 1px solid #000;
    border-radius: 7px;
    font: 11px/13px "Liberation Sans", sans-serif;
    color: #000;
}
.dhead{
    display: flex;
    align-items: center;
    gap: 10px;
    font-weight: bold;
    font-size: 12px;
}
.dhead svg{
    width: 32px;
    height: 30px;
}
.dialog p{
    padding: 4px 0 7px;
    border-bottom: 1px solid #a0a0a0;
    white-space: nowrap;
}
.dbtns{
    display: flex;
    justify-content: center;
    gap: 11px;
    padding-top: 7px;
}
.dbtns button{
    width: 59px;
    height: 22px;
    border: 1px solid #adadad;
    border-radius: 3px;
}
.focus{
    outline: 1px dotted #000;
}

/* table panel */
.tophead{
    border-bottom: 0;
}
.tbar{
    border-radius: 0;
    padding-left: 9px;
}
.sheet{
    display: flex;
    height: 149px;
    margin-right: 1px;
    padding: 2px;
    background: #f0f0f0;
    border: 1px solid #646464;
    border-left-color: #8a8a8a;
    gap: 1px;
    align-items: flex-start;
}
.sheet table{
    flex: 1;
    table-layout: fixed;
    border-collapse: collapse;
    font: 11px/15px "Liberation Sans", sans-serif;
    color: #000;
}
.w0{
    width: 45px;
}
.w1{
    width: 90px;
}
.w2{
    width: 180px;
}
.w3{
    width: 48px;
}
.w4{
    width: 60px;
}
.w5{
    width: 72px;
}
th,td{
    height: 16px;
    padding: 0 4px;
    border: 1px solid #a0a0a0;
    font-weight: normal;
    white-space: nowrap;
}
td{
    background: #fff;
}
.abc th{
    height: 14px;
    line-height: 12px;
    background: #e1e1e1;
    border-color: #646464;
}
.names th{
    height: 33px;
    line-height: 16px;
    vertical-align: bottom;
    padding: 0;
}
tbody th{
    background: #e1e1e1;
    border-color: #646464;
}
.abc .corner{
    line-height: 13px;
}
.abc .sel,th.sel{
    background: #0078d7;
    color: #fff;
}
.edit{
    outline: 1px dotted #000;
    outline-offset: -1px;
}
.r{
    text-align: right;
}
.ro{
    background: #f0f0f0;
    color: #7c7c7c;
}
.mat{
    padding: 0 1px;
}
.sw{
    display: inline-block;
    width: 13px;
    height: 13px;
    margin-right: 13px;
    vertical-align: top;
    background: #6464ff;
    border: 1px solid #333;
}
.scroll{
    width: 16px;
    height: 128px;
    display: flex;
    flex-direction: column;
}
.scroll button{
    height: 16px;
}
.scroll path{
    stroke: #505050;
    stroke-width: 2;
}
.thumb{
    flex: 1;
    background: #cdcdcd;
}
.tabs{
    display: flex;
    height: 36px;
    background: linear-gradient(#f0f0f0 17px, #d5d5d5 17px 18px, #f0f0f0 18px);
    font: 11px/16px "Liberation Sans", sans-serif;
    color: #000;
    align-items: flex-start;
}
.tabs button{
    height: 17px;
    padding: 0 4px;
    margin-right: -1px;
    border: 1px solid #646464;
    border-top: 0;
    border-radius: 0 0 4px 4px;
}
.tabs .cur{
    padding-bottom: 2px;
    background: #f0f0f0;
}

/* status bar */
.status{
    display: flex;
    align-items: center;
    gap: 2px;
    height: 21px;
    padding-left: 4px;
    background: linear-gradient(#dfe2e8, #b9bfc9 40%, #a9afb9 70%, #b7bdc7);
    border-top: 1px solid #a7abb5;
    font: 11px/16px "Liberation Sans", sans-serif;
    color: #222;
}
.msg{
    flex: 1;
}
.status button{
    height: 19px;
    padding: 0 2px;
    border: 1px solid #e6e8ec;
}
.status .in{
    border-color: #111 #fff #fff #111;
}
.cell{
    width: 72px;
    height: 17px;
    border-left: 1px solid #9499a2;
}
.wide{
    width: 152px;
}
.last{
    width: 90px;
    display: flex;
    justify-content: flex-end;
    align-items: flex-end;
}
.last svg{
    width: 12px;
    height: 12px;
}
```
